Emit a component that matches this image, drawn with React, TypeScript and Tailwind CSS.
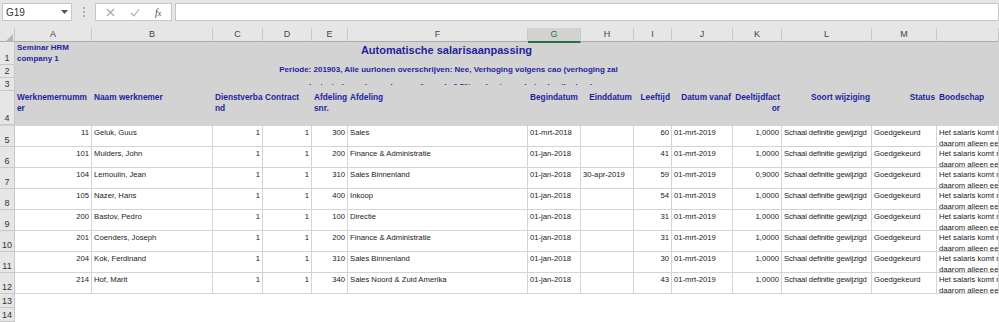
import React from 'react';

const COLS =
    "grid grid-cols-[15px_77px_121px_50px_49px_36px_180px_53px_53px_38px_61px_49px_90px_65px_62px]";

const letters = ["A", "B", "C", "D", "E", "F", "G", "H", "I", "J", "K", "L", "M", ""];

interface Employee {
    nr: number;
    naam: string;
    afd: number;
    afdeling: string;
    begin: string;
    eind: string;
    leeftijd: number;
    factor: string;
}

const employees: Employee[] = [
    { nr: 11, naam: "Geluk, Guus", afd: 300, afdeling: "Sales", begin: "01-mrt-2018", eind: "", leeftijd: 60, factor: "1,0000" },
    { nr: 101, naam: "Mulders, John", afd: 200, afdeling: "Finance & Administratie", begin: "01-jan-2018", eind: "", leeftijd: 41, factor: "1,0000" },
    { nr: 104, naam: "Lemoulin, Jean", afd: 310, afdeling: "Sales Binnenland", begin: "01-jan-2018", eind: "30-apr-2019", leeftijd: 59, factor: "0,9000" },
    { nr: 105, naam: "Nazer, Hans", afd: 400, afdeling: "Inkoop", begin: "01-jan-2018", eind: "", leeftijd: 54, factor: "1,0000" },
    { nr: 200, naam: "Bastov, Pedro", afd: 100, afdeling: "Directie", begin: "01-jan-2018", eind: "", leeftijd: 31, factor: "1,0000" },
    { nr: 201, naam: "Coenders, Joseph", afd: 200, afdeling: "Finance & Administratie", begin: "01-jan-2018", eind: "", leeftijd: 31, factor: "1,0000" },
    { nr: 204, naam: "Kok, Ferdinand", afd: 310, afdeling: "Sales Binnenland", begin: "01-jan-2018", eind: "", leeftijd: 30, factor: "1,0000" },
    { nr: 214, naam: "Hof, Marit", afd: 340, afdeling: "Sales Noord & Zuid Amerika", begin: "01-jan-2018", eind: "", leeftijd: 43, factor: "1,0000" },
];

function RowNum({ n }: { n: number }) {
    return (
        <div className="bg-[#e6e6e6] border-r border-b border-[#c8c8c8] flex items-end justify-center text-[9px] leading-[10px] text-[#333] pb-[1px] overflow-hidden">
            {n}
        </div>
    );
}

function Cell({ children, right, tight }: { children?: React.ReactNode; right?: boolean; tight?: boolean }) {
    return (
        <div
            className={`border-r border-b border-[#d4d4d4] px-[2px] pt-[1px] text-[7.7px] leading-[11px] text-[#1a1a1a] whitespace-nowrap overflow-hidden ${right ? "text-right" : "text-left"} ${tight ? "tracking-[-0.12px]" : ""}`}
        >
            {children}
        </div>
    );
}

function Head({ children, right }: { children?: React.ReactNode; right?: boolean }) {
    return (
        <div
            className={`px-[2px] pt-[1px] text-[8.3px] leading-[11px] font-bold text-[#1f1fa0] whitespace-nowrap ${right ? "text-right" : "text-left"}`}
        >
            {children}
        </div>
    );
}

function FormulaBar() {
    return (
        <div className="h-[28px] bg-[#e6e6e6] flex items-start pt-[3px] pl-[2px]">
            <div className="w-[70px] h-[18px] bg-white border border-[#c6c6c6] flex items-center justify-between px-[3px]">
                <span className="text-[10px] text-[#333]">G19</span>
                <svg width="7" height="4" viewBox="0 0 7 4">
                    <path d="M0 0 L7 0 L3.5 4 Z" fill="#555" />
                </svg>
            </div>
            <div className="w-[23px] h-[18px] flex flex-col items-center justify-center gap-[2px]">
                <span className="w-[2px] h-[2px] bg-[#b0b0b0]" />
                <span className="w-[2px] h-[2px] bg-[#b0b0b0]" />
                <span className="w-[2px] h-[2px] bg-[#b0b0b0]" />
            </div>
            <div className="w-[77px] h-[18px] bg-white border border-[#c6c6c6] flex items-center justify-around px-[2px]">
                <svg width="9" height="9" viewBox="0 0 9 9">
                    <path d="M1 1 L8 8 M8 1 L1 8" stroke="#a6a6a6" strokeWidth="1.1" />
                </svg>
                <svg width="10" height="9" viewBox="0 0 10 9">
                    <path d="M1 5 L4 8 L9 1" stroke="#a6a6a6" strokeWidth="1.1" fill="none" />
                </svg>
                <span className="font-['Liberation_Serif',serif] italic text-[10px] text-[#444]">
                    f<span className="text-[8px]">x</span>
                </span>
            </div>
            <div className="ml-[3px] flex-1 h-[18px] bg-white border border-[#c6c6c6]" />
        </div>
    );
}

export default function App() {
    return (
        <div className="w-[999px] h-[322px] overflow-hidden bg-white font-['Liberation_Sans',Arial,sans-serif]">
            <FormulaBar />

            {/* column letters */}
            <div className={`${COLS} h-[14px] bg-[#e6e6e6] border-b border-[#ababab]`}>
                <div className="border-r border-[#c8c8c8] flex items-end justify-end pr-[1px] pb-[1px]">
                    <svg width="8" height="8" viewBox="0 0 8 8">
                        <path d="M8 0 L8 8 L0 8 Z" fill="#b5b5b5" />
                    </svg>
                </div>
                {letters.map((l, i) =>
                    l === "G" ? (
                        <div key={i} className="bg-[#d2d2d2] border-r border-[#c8c8c8] border-b-2 border-b-[#217346] text-center text-[9px] leading-[13px] text-[#217346]">
                            {l}
                        </div>
                    ) : (
                        <div key={i} className="border-r border-[#c8c8c8] text-center text-[9px] leading-[13px] text-[#444]">
                            {l}
                        </div>
                    )
                )}
            </div>

            {/* row 1 */}
            <div className={`${COLS} h-[23px] bg-[#d3d3d3]`}>
                <RowNum n={1} />
                <div className="col-span-3 px-[2px] text-[8px] leading-[11px] font-bold text-[#1f1fa0]">
                    Seminar HRM
                    <br />
                    company 1
                </div>
                <div className="col-start-6 col-span-3 pt-[1px] text-center text-[11px] leading-[14px] font-bold text-[#1f1fa0] whitespace-nowrap">
                    Automatische salarisaanpassing
                </div>
            </div>

            {/* row 2: wrapped text, second line mostly clipped */}
            <div className={`${COLS} grid-rows-[13px] h-[13px] bg-[#d3d3d3]`}>
                <RowNum n={2} />
                <div className="col-start-5 col-span-5 flex flex-col items-center text-[8px] font-bold text-[#1f1fa0] whitespace-nowrap">
                    <div className="leading-[9px]">
                        Periode: 201903, Alle uurlonen overschrijven: Nee, Verhoging volgens cao (verhoging zal
                    </div>
                    <div className="mt-[8px] h-[3px] shrink-0 overflow-hidden leading-[9px]">
                        plaatsvinden volgens de cao-afspraak, 2,5% op basis van het schaalbedrag)
                    </div>
                </div>
            </div>

            {/* row 3 */}
            <div className={`${COLS} h-[13px] bg-[#d3d3d3]`}>
                <RowNum n={3} />
            </div>

            {/* row 4 headers */}
            <div className={`${COLS} h-[34px] bg-[#d3d3d3]`}>
                <RowNum n={4} />
                <Head>
                    Werknemernumm
                    <br />
                    er
                </Head>
                <Head>Naam werknemer</Head>
                <Head>
                    Dienstverba
                    <br />
                    nd
                </Head>
                <Head>Contract</Head>
                <Head>
                    Afdeling
                    <br />
                    snr.
                </Head>
                <Head>Afdeling</Head>
                <Head>Begindatum</Head>
                <Head right>Einddatum</Head>
                <Head right>Leeftijd</Head>
                <Head right>Datum vanaf</Head>
                <Head right>
                    Deeltijdfact
                    <br />
                    or
                </Head>
                <Head right>Soort wijziging</Head>
                <Head right>Status</Head>
                <Head>Boodschap</Head>
            </div>

            {/* data rows */}
            <div className="border-t border-[#d4d4d4]">
                {employees.map((e, i) => (
                    <div key={e.nr} className={`${COLS} h-[21px]`}>
                        <RowNum n={i + 5} />
                        <Cell right>{e.nr}</Cell>
                        <Cell>{e.naam}</Cell>
                        <Cell right>1</Cell>
                        <Cell right>1</Cell>
                        <Cell right>{e.afd}</Cell>
                        <Cell>{e.afdeling}</Cell>
                        <Cell>{e.begin}</Cell>
                        <Cell>{e.eind}</Cell>
                        <Cell right>{e.leeftijd}</Cell>
                        <Cell>01-mrt-2019</Cell>
                        <Cell right>{e.factor}</Cell>
                        <Cell tight>Schaal definitie gewijzigd</Cell>
                        <Cell>Goedgekeurd</Cell>
                        <Cell>
                            Het salaris komt niet boven het maximum,
                            <br />
                            daarom alleen een periodiek
                        </Cell>
                    </div>
                ))}
            </div>

            {/* empty rows */}
            <div className={`${COLS} h-[14px]`}>
                <RowNum n={13} />
            </div>
            <div className={`${COLS} h-[14px]`}>
                <RowNum n={14} />
            </div>
        </div>
    );
}
